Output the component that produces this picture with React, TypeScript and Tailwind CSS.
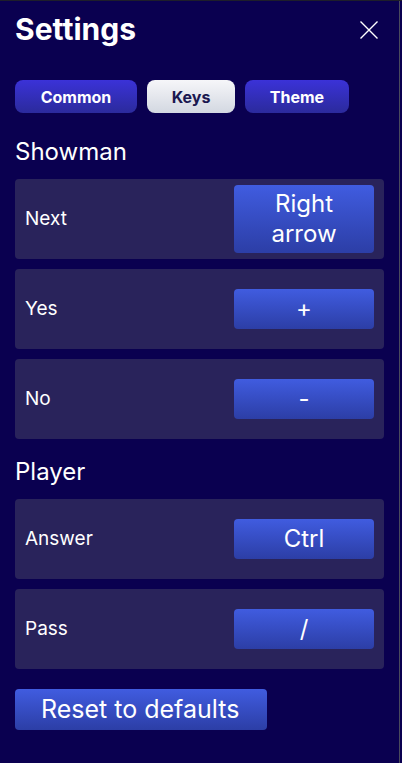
const font = { fontFamily: "Inter, 'Noto Sans', sans-serif" };

type KeyRow = { label: string; value: string };

const showman: KeyRow[] = [
  { label: "Next", value: "Right arrow" },
  { label: "Yes", value: "+" },
  { label: "No", value: "-" },
];

const player: KeyRow[] = [
  { label: "Answer", value: "Ctrl" },
  { label: "Pass", value: "/" },
];

const Row = ({ label, value }: KeyRow) => (
  <div className="flex h-[80px] items-center justify-between rounded-[4px] bg-[#29235b] pl-[10px] pr-[10px]">
    <span className="text-[19px] text-white">{label}</span>
    <button className="flex min-h-[40px] w-[140px] items-center justify-center rounded-[4px] bg-gradient-to-b from-[#405ce0] to-[#2c3ea6] px-[12px] py-[4px] text-center text-[24px] leading-[30px] text-white">
      {value}
    </button>
  </div>
);

const Section = ({ title, rows }: { title: string; rows: KeyRow[] }) => (
  <div>
    <h2 className="mb-[12px] text-[24px] leading-[30px] text-white">{title}</h2>
    <div className="flex flex-col gap-[10px]">
      {rows.map((r) => (
        <Row key={r.label} {...r} />
      ))}
    </div>
  </div>
);

export default function App() {
  return (
    <div
      style={font}
      className="flex h-[763px] w-[402px] border-t border-[#1e1e2a] bg-[#0a0050]"
    >
      <div className="flex-1 px-[15px]">
        <div className="mt-[10px] flex h-[36px] items-center justify-between">
          <h1 className="text-[30px] font-bold leading-[36px] text-white">Settings</h1>
          <svg width="18" height="18" viewBox="0 0 18 18" className="mr-[6px] mt-[2px]">
            <path d="M0.5 0.5 L17.5 17.5 M17.5 0.5 L0.5 17.5" stroke="white" strokeWidth="1.4" fill="none" />
          </svg>
        </div>

        <div className="mt-[33px] flex gap-[10px]">
          <button className="h-[33px] w-[122px] rounded-[8px] bg-gradient-to-b from-[#3b32d8] to-[#2b2a9c] text-[16px] font-bold text-white">
            Common
          </button>
          <button className="h-[33px] w-[88px] rounded-[8px] bg-gradient-to-b from-[#f6f6f9] to-[#d3d8e1] text-[16px] font-bold text-[#1a1850]">
            Keys
          </button>
          <button className="h-[33px] w-[104px] rounded-[8px] bg-gradient-to-b from-[#3b32d8] to-[#2b2a9c] text-[16px] font-bold text-white">
            Theme
          </button>
        </div>

        <div className="mt-[24px]">
          <Section title="Showman" rows={showman} />
        </div>
        <div className="mt-[18px]">
          <Section title="Player" rows={player} />
        </div>

        <button className="mt-[20px] h-[41px] w-[252px] rounded-[4px] bg-gradient-to-b from-[#405ce0] to-[#2c3ea6] pl-[26px] text-left text-[25px] text-white">
          Reset to defaults
        </button>
      </div>
      <div className="w-[1px] bg-[#4a4a5c]" />
      <div className="w-[2px] bg-[#0a0050]" />
    </div>
  );
}
